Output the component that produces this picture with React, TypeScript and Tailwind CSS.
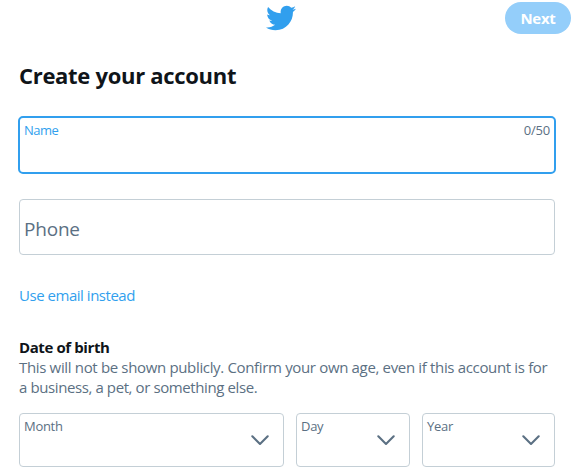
import { FaTwitter } from "react-icons/fa"

const selects = [
  { label: "Month", width: "w-[265px]" },
  { label: "Day", width: "w-[114px]" },
  { label: "Year", width: "w-[133px]" },
]

function ChevronIcon() {
  return (
    <svg width="18" height="11" viewBox="0 0 18 11" fill="none" className="text-[#5b7083]">
      <path d="M1.3 1.3 9 8.9l7.7-7.6" stroke="currentColor" strokeWidth="2.1" strokeLinecap="round" strokeLinejoin="round" />
    </svg>
  )
}

export default function App() {
  return (
    <div className="w-[578px] h-[476px] bg-white overflow-hidden text-[#5b7083] font-['Open_Sans','Noto_Sans',sans-serif]">
      {/* Top bar */}
      <header className="grid grid-cols-[1fr_30px_1fr] items-center h-9 pr-[7px]">
        <span />
        <FaTwitter className="w-[30px] h-[30px] text-[#319fee] -ml-[5px]" />
        <button className="justify-self-end w-[66px] h-8 rounded-full bg-[#94cefa] text-white font-bold text-[15px] tracking-[-0.3px]">
          Next
        </button>
      </header>

      <main className="pl-[19px] pr-[23px]">
        <h1 className="mt-[24px] h-[30px] leading-[30px] text-[22px] font-bold tracking-[-0.3px] text-[#0f1419] whitespace-nowrap">
          Create your account
        </h1>

        <div className="mt-[26px] -mx-px h-[58px] rounded-[5px] border-2 border-[#319fee] flex justify-between px-1 pt-[4px] text-[13px] leading-[16px]">
          <label className="text-[#319fee] tracking-[-0.5px]">Name</label>
          <span className="tracking-[-0.2px]">0/50</span>
        </div>

        <div className="mt-[25px] h-14 rounded border border-[#c4cfd6] flex items-center px-1 pt-1 text-[19px] tracking-[-0.2px]">
          Phone
        </div>

        <a className="block mt-[30px] h-5 leading-5 text-[15px] tracking-[-0.47px] text-[#319fee]">Use email instead</a>

        <h2 className="mt-8 h-5 leading-5 text-[15px] font-bold tracking-[-0.4px] text-[#0f1419]">Date of birth</h2>
        <p className="text-[15px] leading-5 tracking-[-0.4px] whitespace-nowrap">
          <span className="tracking-[-0.34px]">
            This will not be shown publicly. Confirm your own age, even if this account is for
          </span>
          <br />
          a business, a pet, or something else.
        </p>

        <div className="mt-4 flex gap-3">
          {selects.map((s) => (
            <div
              key={s.label}
              className={`${s.width} h-[54px] rounded border border-[#c4cfd6] flex justify-between pl-1 pr-[14px]`}
            >
              <span className="pt-1 text-[13px] leading-4 tracking-[-0.3px]">{s.label}</span>
              <span className="pt-[21px]">
                <ChevronIcon />
              </span>
            </div>
          ))}
        </div>
      </main>
    </div>
  )
}
